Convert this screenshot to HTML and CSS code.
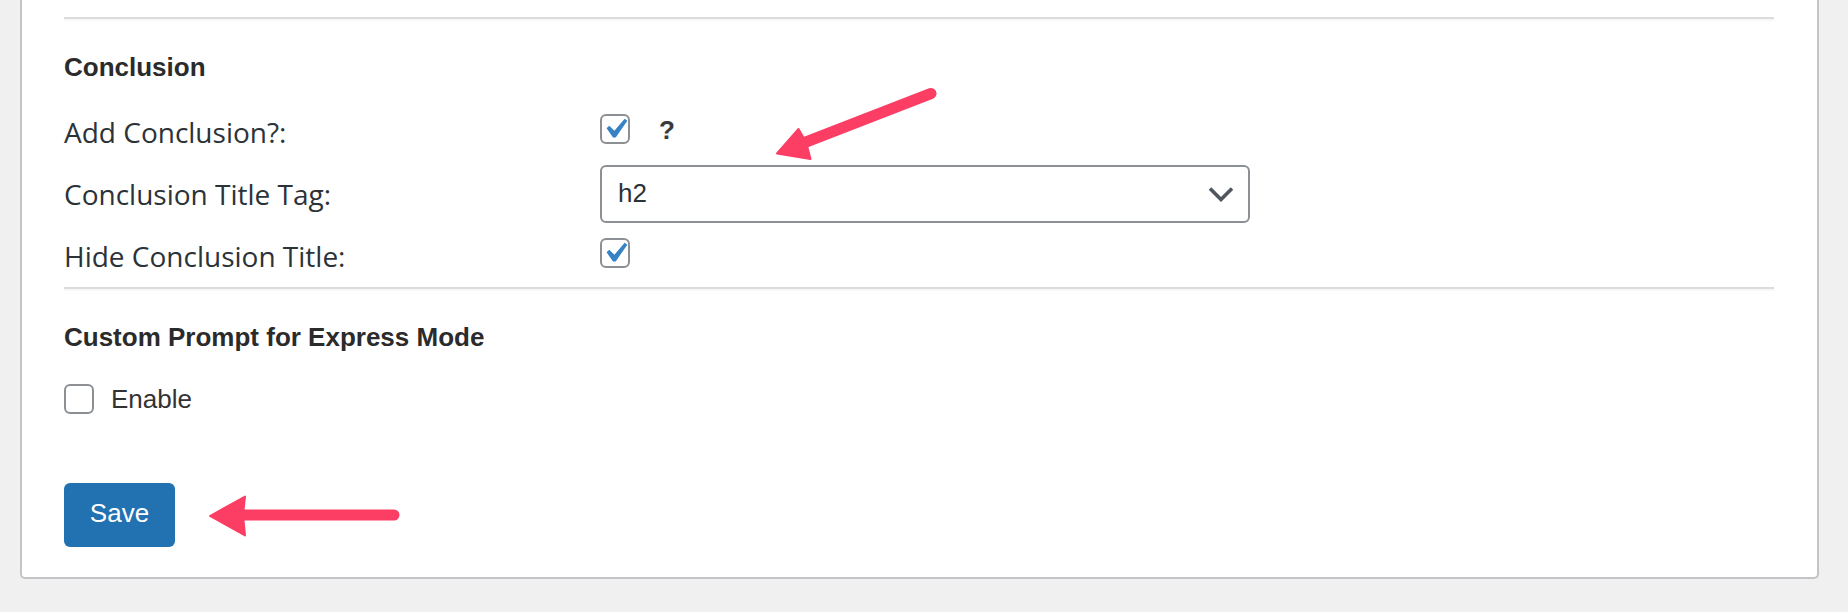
FILE: index.html
```html
<!DOCTYPE html>
<html lang="en">
<head>
<meta charset="utf-8">
<title>Settings</title>
<link rel="stylesheet" href="styles.css">
</head>
<body>
<div class="card">
  <hr class="sep">
  <h3 class="section-title">Conclusion</h3>
  <div class="form-rows">
    <div class="form-row">
      <label class="field-label">Add Conclusion?:</label>
      <div class="field-control">
        <span class="checkbox checked shift-up">
          <svg viewBox="0 0 20 20" width="40" height="40"><path d="M14.83 4.89l1.34.94-5.81 8.38H9.02L5.78 9.67l1.34-1.25 2.57 2.4z" fill="#3582c4"/></svg>
        </span>
        <span class="help">?</span>
      </div>
    </div>
    <div class="form-row">
      <label class="field-label">Conclusion Title Tag:</label>
      <div class="field-control">
        <div class="select">
          <span class="select-value">h2</span>
          <svg class="chevron" width="26" height="16" viewBox="0 0 26 16"><path d="M2 2.5 L13 13.5 L24 2.5" fill="none" stroke="#50575e" stroke-width="3.6"/></svg>
        </div>
      </div>
    </div>
    <div class="form-row">
      <label class="field-label">Hide Conclusion Title:</label>
      <div class="field-control">
        <span class="checkbox checked shift-up">
          <svg viewBox="0 0 20 20" width="40" height="40"><path d="M14.83 4.89l1.34.94-5.81 8.38H9.02L5.78 9.67l1.34-1.25 2.57 2.4z" fill="#3582c4"/></svg>
        </span>
      </div>
    </div>
  </div>
  <hr class="sep sep-second">
  <h3 class="section-title">Custom Prompt for Express Mode</h3>
  <label class="enable-row">
    <span class="checkbox"></span>
    <span class="enable-text">Enable</span>
  </label>
  <button class="save-btn" type="button">Save</button>
</div>
<svg class="annotations" width="1848" height="612" viewBox="0 0 1848 612">
  <g fill="#fc3d64" stroke="#fc3d64" stroke-linejoin="round" stroke-linecap="round">
    <line x1="931" y1="93.5" x2="806" y2="142" stroke-width="11"/>
    <polygon points="777,153.5 798.5,129 806,142 810.5,159" stroke-width="2"/>
    <line x1="394" y1="515" x2="240" y2="515" stroke-width="11"/>
    <polygon points="210,516 245,496.5 243,515 245,535.5" stroke-width="2"/>
  </g>
</svg>
</body>
</html>
```
FILE: styles.css
```css
html, body {
  margin: 0;
  padding: 0;
}
body {
  background: #f0f0f1;
  position: relative;
  width: 1848px;
  height: 612px;
  overflow: hidden;
  font-family: "Liberation Sans", Arial, sans-serif;
  color: #333;
}
.card {
  margin: 0 29px 0 20px;
  background: #fff;
  border: 2px solid #c3c4c7;
  border-top: 0;
  border-radius: 0 0 5px 5px;
  padding: 17px 43px 30px 42px;
}
.sep {
  margin: 0;
  height: 0;
  border: 0;
  border-top: 2px solid #dcdcde;
  border-bottom: 2px solid #f6f7f7;
}
.sep-second {
  margin-top: 2px;
}
.section-title {
  margin: 31px 0 0;
  font-family: "Liberation Sans", Arial, sans-serif;
  font-weight: 700;
  font-size: 26px;
  line-height: 30px;
  color: #2b2b2b;
}
.form-rows {
  margin-top: 21px;
  display: grid;
  row-gap: 4px;
}
.form-row {
  display: grid;
  grid-template-columns: 536px 650px;
  height: 58px;
  align-items: center;
}
.field-label {
  font-family: "Open Sans", sans-serif;
  font-size: 28px;
  line-height: 38px;
  color: #2c3338;
}
.field-control {
  display: flex;
  align-items: center;
  height: 58px;
}
.checkbox {
  box-sizing: border-box;
  width: 30px;
  height: 30px;
  border: 2px solid #8c8f94;
  border-radius: 6px;
  background: #fff;
  display: flex;
  align-items: center;
  justify-content: center;
  flex: none;
}
.checkbox svg {
  flex: none;
}
.shift-up {
  margin-top: -7px;
}
.help {
  margin-left: 29px;
  margin-top: -4px;
  font-family: "Liberation Sans", Arial, sans-serif;
  font-weight: 600;
  font-size: 26px;
  line-height: 30px;
  color: #3a3a3a;
}
.select {
  box-sizing: border-box;
  width: 650px;
  height: 58px;
  border: 2px solid #8c8f94;
  border-radius: 6px;
  background: #fff;
  display: flex;
  align-items: center;
  justify-content: space-between;
  padding: 0 14px 0 16px;
}
.select-value {
  font-family: "Liberation Sans", Arial, sans-serif;
  font-size: 26px;
  line-height: 30px;
  margin-top: -2px;
  color: #2c3338;
}
.chevron {
  display: block;
}
.enable-row {
  margin-top: 32px;
  display: flex;
  align-items: center;
  height: 30px;
}
.enable-text {
  margin-left: 17px;
  font-family: "Liberation Sans", Arial, sans-serif;
  font-size: 26px;
  line-height: 30px;
  color: #333;
}
.save-btn {
  display: block;
  margin-top: 69px;
  box-sizing: border-box;
  width: 111px;
  height: 64px;
  padding: 0 0 4px;
  border: 0;
  border-radius: 6px;
  background: #2271b1;
  color: #fff;
  font-family: "Liberation Sans", Arial, sans-serif;
  font-size: 26px;
  line-height: 60px;
  text-align: center;
}
.annotations {
  position: absolute;
  top: 0;
  left: 0;
  pointer-events: none;
}
```
